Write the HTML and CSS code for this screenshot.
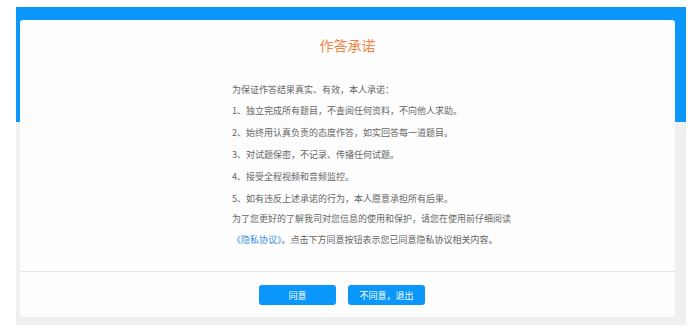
FILE: index.html
```html
<!DOCTYPE html>
<html lang="zh-CN">
<head>
    <meta charset="UTF-8">
    <meta name="viewport" content="width=device-width, initial-scale=1">
    <title>作答承诺</title>
    <link rel="stylesheet" href="styles.css">
</head>
<body>
    <div class="page">
        <div class="dialog">
            <div class="content">
                <h2 class="title">作答承诺</h2>
                <div class="terms">
                    <p class="intro">为保证作答结果真实、有效，本人承诺：</p>
                    <ol class="items">
                        <li>1、独立完成所有题目，不查阅任何资料，不向他人求助。</li>
                        <li>2、始终用认真负责的态度作答，如实回答每一道题目。</li>
                        <li>3、对试题保密，不记录、传播任何试题。</li>
                        <li>4、接受全程视频和音频监控。</li>
                        <li>5、如有违反上述承诺的行为，本人愿意承担所有后果。</li>
                    </ol>
                    <p class="privacy">
                        为了您更好的了解我司对您信息的使用和保护，请您在使用前仔细阅读<br>
                        <a href="#">《隐私协议》</a>。点击下方同意按钮表示您已同意隐私协议相关内容。
                    </p>
                </div>
            </div>
            <div class="actions">
                <button class="btn">同意</button>
                <button class="btn">不同意，退出</button>
            </div>
        </div>
    </div>
</body>
</html>
```

FILE: styles.css
```css
html, body {
    height: 100%;
}

body {
    margin: 0;
    padding: 0;
    background: #fff;
    font-family: "Microsoft YaHei", "Noto Sans CJK SC", sans-serif;
    color: #666;
}

.page {
    width: 670px;
    height: 318px;
    margin: 7px 0 0 16px;
    padding: 13px 11px 8px 4px;
    box-sizing: border-box;
    background: linear-gradient(#0b97fa 0, #0b97fa 115px, #f0f0f0 115px);
}

.dialog {
    background: #fdfdfd;
    border-radius: 3px;
    height: 100%;
    display: flex;
    flex-direction: column;
}

.content {
    height: 252px;
    box-sizing: border-box;
    padding-top: 15px;
    border-bottom: 1px solid #e6e6e6;
}

    .content .title {
        margin: 0;
        text-align: center;
        font-size: 14px;
        line-height: 20px;
        font-weight: 400;
        color: #f0874a;
    }

.terms {
    margin: 26px 0 0 212px;
    font-size: 9px;
    line-height: 18px;
}

    .terms p {
        margin: 0;
    }

    .terms .items {
        list-style: none;
        margin: 1px 0 0;
        padding: 0;
        line-height: 22px;
    }

    .terms .privacy {
        line-height: 21px;
        margin-top: -2px;
    }

    .terms a {
        color: #3a8ee6;
        text-decoration: none;
    }

.actions {
    display: flex;
    justify-content: center;
    gap: 12px;
    padding: 13px 11px 0 0;
}

    .actions .btn {
        width: 77px;
        height: 20px;
        border: none;
        border-radius: 3px;
        background: #0b97fa;
        color: #fff;
        font-family: inherit;
        font-size: 9px;
        padding: 0;
    }
```
